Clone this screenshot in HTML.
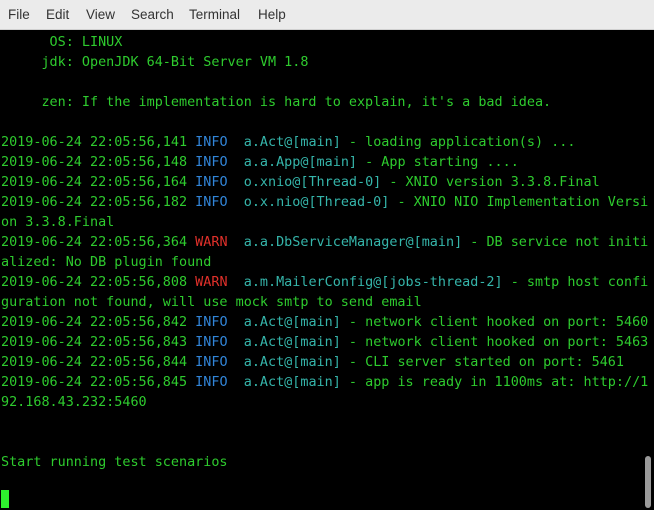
<!DOCTYPE html>
<html><head><style>
body{margin:0;width:654px;height:510px;background:#000;overflow:hidden;position:relative}
.menu{position:absolute;left:0;top:0;width:654px;height:29px;background:#ebebeb;border-bottom:1px solid #d0d0d0;font:13.5px "Liberation Sans",sans-serif;color:#333}
.menu span{position:absolute;top:7px}
pre{position:absolute;left:1px;top:33px;margin:0;font:13.45px/20px "DejaVu Sans Mono",monospace;color:#2ecb2e;white-space:pre}
.i{color:#3185d8}.l{color:#35b5aa}.w{color:#e0302a}
.cur{position:absolute;left:1px;top:490px;width:8px;height:18px;background:#2ef02e}
.sb{position:absolute;left:645px;top:456px;width:6px;height:52px;border-radius:3px;background:#9a9a9a}
</style></head><body>
<div class="menu"><span style="left:8px">File</span><span style="left:46px">Edit</span><span style="left:86px">View</span><span style="left:131px">Search</span><span style="left:189px">Terminal</span><span style="left:258px">Help</span></div>
<pre>      OS: LINUX
     jdk: OpenJDK 64-Bit Server VM 1.8

     zen: If the implementation is hard to explain, it's a bad idea.

2019-06-24 22:05:56,141 <span class="i">INFO</span>  <span class="l">a.Act@[main]</span> - loading application(s) ...
2019-06-24 22:05:56,148 <span class="i">INFO</span>  <span class="l">a.a.App@[main]</span> - App starting ....
2019-06-24 22:05:56,164 <span class="i">INFO</span>  <span class="l">o.xnio@[Thread-0]</span> - XNIO version 3.3.8.Final
2019-06-24 22:05:56,182 <span class="i">INFO</span>  <span class="l">o.x.nio@[Thread-0]</span> - XNIO NIO Implementation Versi
on 3.3.8.Final
2019-06-24 22:05:56,364 <span class="w">WARN</span>  <span class="l">a.a.DbServiceManager@[main]</span> - DB service not initi
alized: No DB plugin found
2019-06-24 22:05:56,808 <span class="w">WARN</span>  <span class="l">a.m.MailerConfig@[jobs-thread-2]</span> - smtp host confi
guration not found, will use mock smtp to send email
2019-06-24 22:05:56,842 <span class="i">INFO</span>  <span class="l">a.Act@[main]</span> - network client hooked on port: 5460
2019-06-24 22:05:56,843 <span class="i">INFO</span>  <span class="l">a.Act@[main]</span> - network client hooked on port: 5463
2019-06-24 22:05:56,844 <span class="i">INFO</span>  <span class="l">a.Act@[main]</span> - CLI server started on port: 5461
2019-06-24 22:05:56,845 <span class="i">INFO</span>  <span class="l">a.Act@[main]</span> - app is ready in 1100ms at: http://1
92.168.43.232:5460


Start running test scenarios</pre>
<div class="cur"></div><div class="sb"></div>
</body></html>
